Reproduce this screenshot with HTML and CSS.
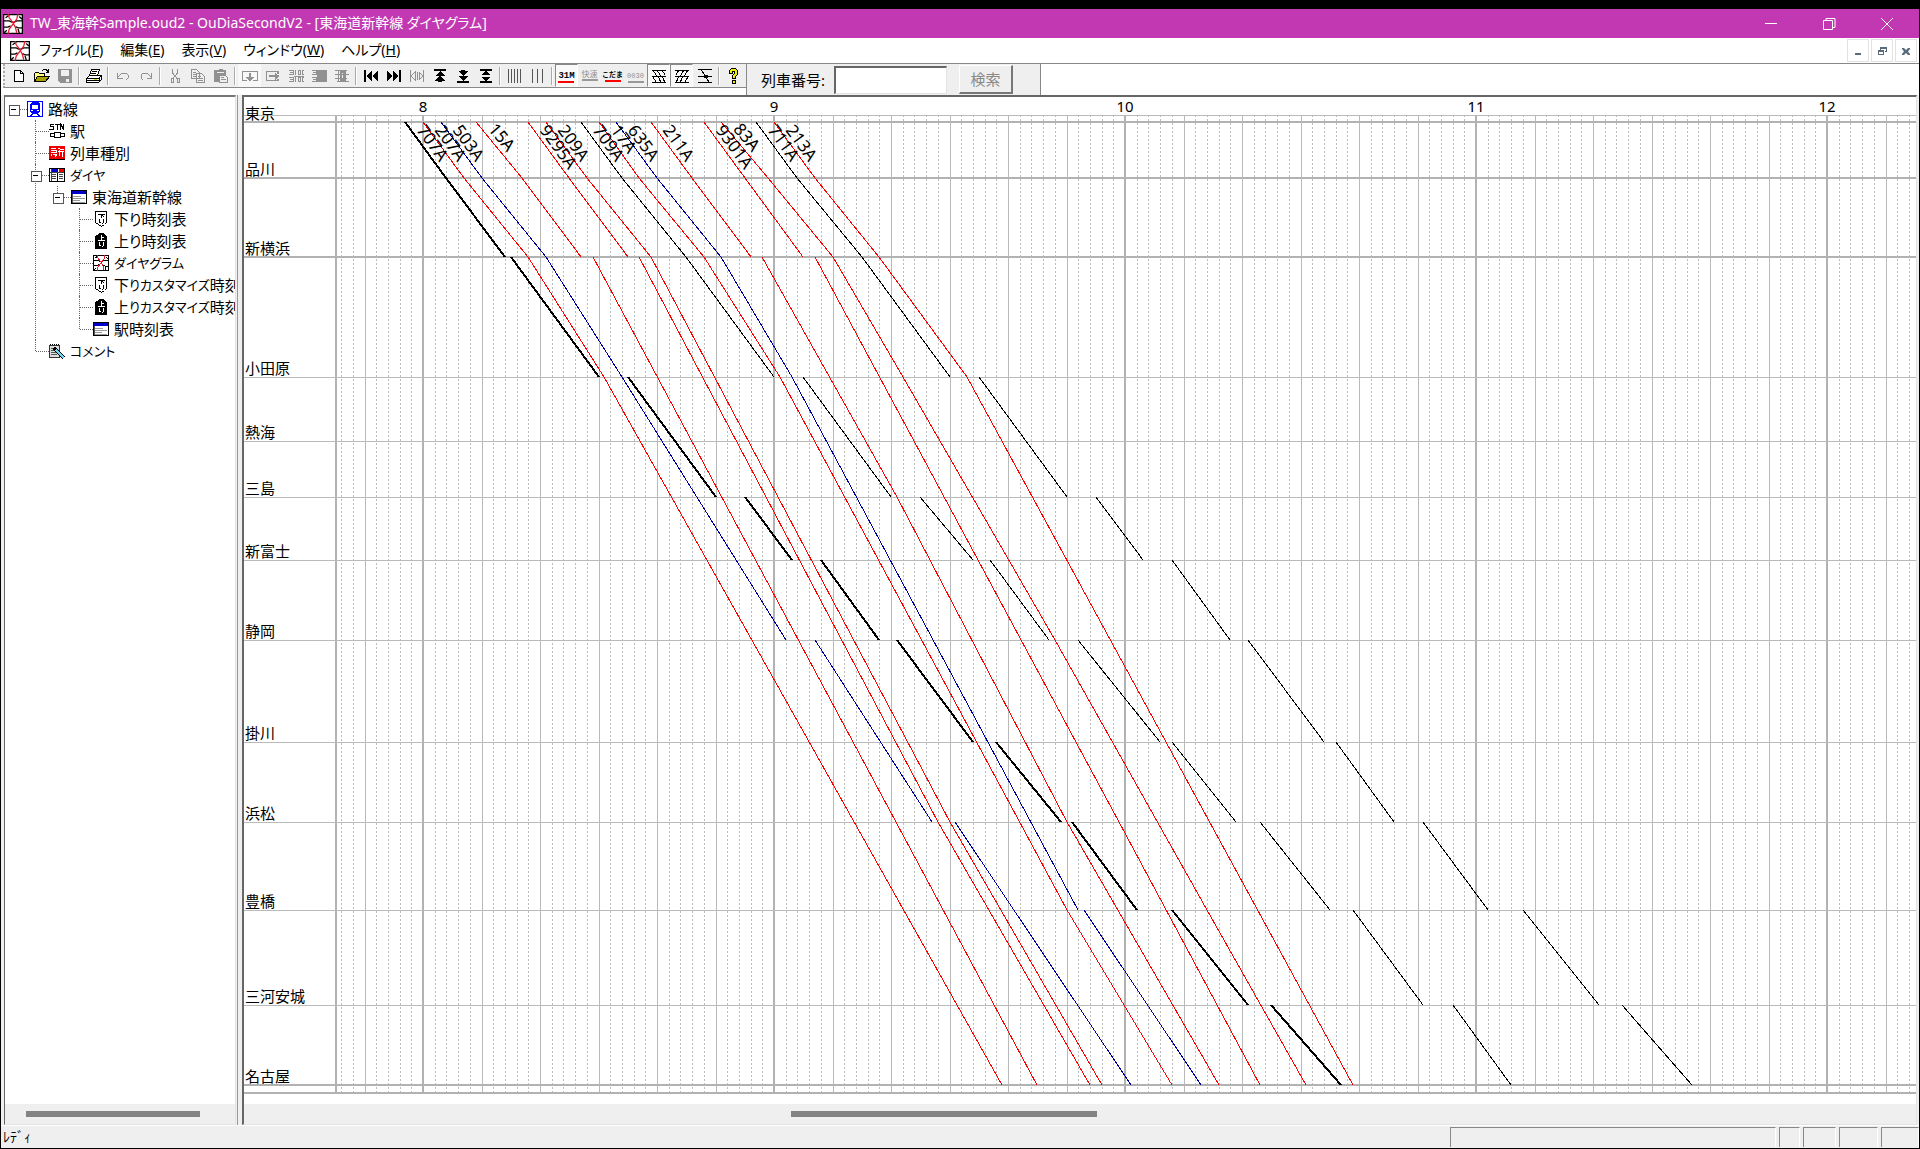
FILE: index.html
```html
<!DOCTYPE html>
<html lang="ja">
<head>
<meta charset="utf-8">
<title>TW_東海幹Sample.oud2 - OuDiaSecondV2</title>
<link rel="stylesheet" href="styles.css">
</head>
<body>
<svg class="defs" width="0" height="0" aria-hidden="true">
  <symbol id="dia" viewBox="0 0 16 16"><path d="M0 0h16v16H0z" fill="#fff"/><path d="M.5.500h15v15H.5zM0 5.500h5l2 1h2l2-1h5M0 10.500h4l2-1M10 10l2 1h4M2 3l3-2M12 12l1 3M3 13l-2 2M13 2l2 2" fill="none" stroke="#000"/><path d="M4 0l1 3 3 4 2 4 1 4M12 0l-1 4-3 4-3 4-1 4" fill="none" stroke="#e8192c"/></symbol>
  <symbol id="down" viewBox="0 0 16 16"><path d="M2.500.500h11v11l-2 2-3 2-3-2-3-2z" fill="#fff" stroke="#000"/><path d="M5 3.500h7M8.500 3v4M9 4.500l2 1M6.500 8v3l1 1M10.500 7.500v4l-2 2" fill="none" stroke="#000"/></symbol>
  <symbol id="up" viewBox="0 0 16 16"><path d="M2 3l2-1 2-2h4l2 2 2 1v13H2z"/><path d="M8.500 2v5M9 4.500h2M5 7.500h7M6.500 9v3l1 1M10.500 8.500v4l-2 2" fill="none" stroke="#fff"/></symbol>
  <symbol id="table" viewBox="0 0 16 16"><path d="M.5 1.500h15v13H.5z" fill="#fff" stroke="#000"/><path d="M1 2h14v3H1z" fill="#00c"/><path d="M2 7.500h8M2 9.500h12M2 11.500h7M2 13.500h12" stroke="#999"/><path d="M1.500 5v9" stroke="#555"/></symbol>
</svg>

<div class="window">
  <header class="titlebar">
    <svg class="app-icon"><use href="#dia"/></svg>
    <h1 class="title">TW_東海幹Sample.oud2 - OuDiaSecondV2 - [東海道新幹線 ダイヤグラム]</h1>
    <div class="caption-buttons">
      <button aria-label="最小化"><svg viewBox="0 0 14 14"><path d="M1 6.500h12"/></svg></button>
      <button aria-label="元に戻す"><svg viewBox="0 0 14 14"><path d="M1.500 3.500h9v9h-9zM4 3.500v-2h9v9h-2"/></svg></button>
      <button aria-label="閉じる"><svg viewBox="0 0 14 14"><path d="M1 1l12 12M13 1L1 13"/></svg></button>
    </div>
  </header>

  <nav class="menubar">
    <svg class="app-icon"><use href="#dia"/></svg>
    <button>ファイル(<u>F</u>)</button>
    <button>編集(<u>E</u>)</button>
    <button>表示(<u>V</u>)</button>
    <button>ウィンドウ(<u>W</u>)</button>
    <button>ヘルプ(<u>H</u>)</button>
    <div class="mdi-buttons">
      <button aria-label="子ウィンドウの最小化"><svg viewBox="0 0 10 10"><path d="M2 7h6v2H2z"/></svg></button>
      <button aria-label="子ウィンドウを戻す"><svg viewBox="0 0 10 10"><path d="M3 1h7v5H8V5h1V3H4v1H3zM1 4h6v5H1zm1 2v2h4V6z"/></svg></button>
      <button aria-label="子ウィンドウを閉じる"><svg viewBox="0 0 10 10"><path d="M1 2h2l2 2 2-2h2v1L7 5.500 9 8v1H7L5 7 3 9H1V8l2-2.500L1 3z"/></svg></button>
    </div>
  </nav>

  <div class="bars">
    <div class="toolbar" role="toolbar" aria-label="標準">
      <button aria-label="新規作成"><svg viewBox="0 0 16 16"><path d="M3.500 2.500h6l3 3v8h-9z" fill="#fff" stroke="#000"/><path d="M9.500 2.500v3h3" fill="none" stroke="#000"/></svg></button>
      <button aria-label="開く"><svg viewBox="0 0 16 16"><path d="M.5 13.500v-8l1-1h3l1 1h5v3" fill="#ffff80" stroke="#000"/><path d="M.5 13.500l3-5h12l-4 5z" fill="#a8a000" stroke="#000"/><path d="M8 3l2-1.500h2l2 2M14.500 1v3h-3" fill="none" stroke="#000"/></svg></button>
      <button aria-label="保存" disabled><svg viewBox="0 0 16 16"><path d="M1 1h14v14H3l-2-2z" fill="#919191"/><path d="M4 2h8v6H4z" fill="#efefef"/><path d="M9 11h3v3H9z" fill="#efefef"/></svg></button>
      <span class="sep"></span>
      <button aria-label="印刷"><svg viewBox="0 0 16 16"><path d="M5.500 1.500h8l-2 6h-8zM.5 10.500l3-3h12v4l-3 3H.5z" fill="#fff" stroke="#000"/><path d="M6 3.500h5M5 5.500h5M1 10.500h12l2-3M1 12.500h12M13.500 10v4" fill="none" stroke="#000"/><path d="M8 11h3v1H8z" fill="#dd0"/></svg></button>
      <span class="sep"></span>
      <button aria-label="元に戻す" disabled><svg viewBox="0 0 16 16"><path d="M2.500 5v5h5M3 9l4-4h4l2 2v3l-2 2" fill="none" stroke="#919191"/></svg></button>
      <button aria-label="やり直し" disabled><svg viewBox="0 0 16 16"><path d="M13.500 5v5h-5M13 9L9 5H5L3 7v3l2 2" fill="none" stroke="#919191"/></svg></button>
      <span class="sep"></span>
      <button aria-label="切り取り" disabled><svg viewBox="0 0 16 16"><path d="M5.500 1v4l5 6M10.500 1v4l-5 6M4 10.500h2v4H4zM10 10.500h2v4h-2z" fill="none" stroke="#919191"/></svg></button>
      <button aria-label="コピー" disabled><svg viewBox="0 0 16 16"><path d="M1.500 1.500h5l3 3v6h-8zM6.500 5.500h5l3 3v6h-8z" fill="#efefef" stroke="#919191"/><path d="M3 4.500h3M3 6.500h3M3 8.500h3M8 8.500h3M8 10.500h5M8 12.500h5" stroke="#919191"/></svg></button>
      <button aria-label="貼り付け" disabled><svg viewBox="0 0 16 16"><path d="M1 2h4l1-1h3l1 1h3v12H1z" fill="#919191"/><path d="M4 4.500h7" stroke="#efefef"/><path d="M6.500 7.500h6l2 2v5h-8z" fill="#efefef" stroke="#919191"/><path d="M8 9.500h3M8 11.500h5" stroke="#919191"/></svg></button>
      <span class="sep"></span>
      <button class="hot" aria-label="下に挿入" disabled><svg viewBox="0 0 16 16"><path d="M.5 3.500h15M.5 3v10M15.500 3v10M1 12.500h4M11 12.500h4M8 5v6" fill="none" stroke="#919191" stroke-width="1.500"/><path d="M4 9h8l-4 5z" fill="#919191"/></svg></button>
      <button aria-label="右に挿入" disabled><svg viewBox="0 0 16 16"><path d="M13 3.500H1.500v9H13M13 3v3M13 11v2M4 8h8" fill="none" stroke="#919191" stroke-width="1.500"/><path d="M10 5l5 3-5 4z" fill="#919191"/></svg></button>
      <button aria-label="時刻を表示" disabled><svg viewBox="0 0 16 16"><path d="M1 2.500h4v4H1M2 4.500h3M1 9.500h4v4H1M2 11.500h3M7.500 2v5M10 2.500h2v4h-2zM14 2.500h2v4h-2zM7.500 9v5M10 9.500h2v4h-2zM14 9.500h2v4h-2zM6 8h10" fill="none" stroke="#919191"/></svg></button>
      <button aria-label="時刻を隠す" disabled><svg viewBox="0 0 16 16"><path d="M1 2.500h4v4H1M2 4.500h3M1 9.500h4v4H1M2 11.500h3" fill="none" stroke="#919191"/><path d="M6 2h10v12H6z" fill="#919191"/></svg></button>
      <button aria-label="列車編集" disabled><svg viewBox="0 0 16 16"><path d="M1 2.500h12M3 13.500h12M4.500 2v11M11.500 2v11M1 6.500h14M1 10.500h12M7 4h3v8H7z" fill="none" stroke="#919191" stroke-width="1.500"/></svg></button>
      <span class="sep"></span>
      <button aria-label="先頭へ"><svg viewBox="0 0 16 16"><path d="M1 2h2v12H1zM3 8l6-5v10zM9 8l6-5v10z"/></svg></button>
      <button aria-label="末尾へ"><svg viewBox="0 0 16 16"><path d="M13 2h2v12h-2zM13 8L7 3v10zM7 8L1 3v10z"/></svg></button>
      <button aria-label="左右を詰める" disabled><svg viewBox="0 0 16 16"><path d="M1.500 2v12M14.500 2v12M2 8l4-4v8zM14 8l-4-4v8zM8 4v8" fill="none" stroke="#919191"/></svg></button>
      <button aria-label="上端へ"><svg viewBox="0 0 16 16"><path d="M2 1h12v2H2zM8 3l5 5H3zM8 7l5 6h-3v1H6v-1H3z"/></svg></button>
      <button aria-label="下端へ"><svg viewBox="0 0 16 16"><path d="M2 13h12v2H2zM8 13l5-5H3zM8 8l5-5h-3V2H6v1H3z"/></svg></button>
      <button aria-label="中央へ"><svg viewBox="0 0 16 16"><path d="M2 1h12v2H2zM2 13h12v2H2zM8 3l5 4H3zM8 13l5-4H3z"/></svg></button>
      <span class="sep"></span>
      <button aria-label="細かい目盛"><svg viewBox="0 0 16 16"><path d="M1.500 1v14M4.500 1v14M7.500 1v14M10.500 1v14M13.500 1v14" stroke="#555"/></svg></button>
      <button aria-label="粗い目盛"><svg viewBox="0 0 16 16"><path d="M2.500 1v14M7.500 1v14M12.500 1v14" stroke="#555"/></svg></button>
      <span class="sep"></span>
      <button class="tag on" aria-pressed="true">31M</button>
      <button class="tag kanji" disabled>快速</button>
      <button class="tag kanji name">こだま</button>
      <button class="tag" disabled>0030</button>
      <button class="on" aria-label="下り列車" aria-pressed="true"><svg viewBox="0 0 16 16"><path d="M1 2.500h14M1 8.500h14M1 14.500h14" stroke="#000"/><path d="M2 2l3 5 3 3 2 5M6 2l3 5 3 3 2 5M11 2l3 5M2 9l3 5" fill="none" stroke="#000"/></svg></button>
      <button class="on" aria-label="上り列車" aria-pressed="true"><svg viewBox="0 0 16 16"><path d="M1 2.500h14M1 8.500h14M1 14.500h14" stroke="#000"/><path d="M14 2l-3 5-3 3-2 5M10 2L7 7l-3 3-2 5M5 2L2 7M14 9l-3 5" fill="none" stroke="#000"/></svg></button>
      <button aria-label="停車時間"><svg viewBox="0 0 16 16"><path d="M1 1.500h14M1 8.500h14M1 14.500h14M4 1l4 7 4 6" fill="none" stroke="#000"/><path d="M7 7h4v3H7z"/></svg></button>
      <span class="sep"></span>
      <button aria-label="ヘルプ"><svg viewBox="0 0 16 16"><path d="M3.500 5.500v-3l2-2h4l2 2v4l-2 2v2h-3v-3l2-2v-2h-2v2zM6.500 12.500h3v3h-3z" fill="#ee0" stroke="#000"/></svg></button>
    </div>
    <form class="searchbar" onsubmit="return false">
      <label for="train-no">列車番号:</label>
      <input id="train-no" type="text">
      <button disabled>検索</button>
    </form>
  </div>

  <main class="workspace">
    <aside class="tree-pane">
      <ul class="tree">
        <li><div class="row"><span class="stub box"></span><svg viewBox="0 0 16 16"><path d="M.5.500h15v15H.5z" fill="#fff" stroke="#00f"/><path d="M3 3l2-2h6l2 2v8l-2 1 2 3h-2l-1-2H6l-1 2H3l2-3-2-1z" fill="#00f"/><path d="M5 4h6v4H5zM4 9h2v1H4zM10 9h2v1h-2z" fill="#fff"/></svg>路線</div>
          <ul>
            <li><div class="row"><span class="stub"></span><svg viewBox="0 0 16 16"><path d="M5 1.500H1.500v2h3v3H0M6 1.500h5M8.500 1v6M11.500 7V1l3 5V1" fill="none" stroke="#000" stroke-width="1.500"/><path d="M5.500 9.500h6v5h-6zM1.500 10.500h4v3h-4zM11.500 10.500h4v3h-4z" fill="#fff" stroke="#000"/></svg>駅</div></li>
            <li><div class="row"><span class="stub"></span><svg viewBox="0 0 16 16"><path d="M0 1h16v13H0z" fill="#e00"/><path d="M2 3.500h5M2 5.500h5v2H2M2 9v2M4 9.500h2v2M7 9v2M9 4l2-1M9 7l1-1v5M11 4.500h4M11 6.500h4M13.500 7v5" fill="none" stroke="#fff"/><path d="M0 14.500h16" stroke="#000"/></svg>列車種別</div></li>
            <li><div class="row"><span class="stub box"></span><svg viewBox="0 0 16 16"><path d="M.5 1.500h15v13H.5zM8.500 2v13" fill="#fff" stroke="#000"/><path d="M3 2h5v3H3z" fill="#00c"/><path d="M10 2h5v3h-5z" fill="#e00"/><path d="M1 5.500h14M3 7.500h4M3 9.500h4M3 11.500h4M10 7.500h4M10 9.500h4M10 11.500h4M2.500 2v12" stroke="#444"/></svg><span class="kana">ダイヤ</span></div>
              <ul>
                <li><div class="row"><span class="stub box"></span><svg><use href="#table"/></svg>東海道新幹線</div>
                  <ul>
                    <li><div class="row"><span class="stub"></span><svg><use href="#down"/></svg>下り時刻表</div></li>
                    <li><div class="row"><span class="stub"></span><svg><use href="#up"/></svg>上り時刻表</div></li>
                    <li><div class="row"><span class="stub"></span><svg><use href="#dia"/></svg><span class="kana">ダイヤグラム</span></div></li>
                    <li><div class="row"><span class="stub"></span><svg><use href="#down"/></svg>下<span class="kana">りカスタマイズ</span>時刻表</div></li>
                    <li><div class="row"><span class="stub"></span><svg><use href="#up"/></svg>上<span class="kana">りカスタマイズ</span>時刻表</div></li>
                    <li><div class="row"><span class="stub"></span><svg><use href="#table"/></svg>駅時刻表</div></li>
                  </ul>
                </li>
              </ul>
            </li>
            <li><div class="row"><span class="stub"></span><svg viewBox="0 0 16 16"><path d="M.5 2.500h10v12H.5z" fill="#ddd" stroke="#333"/><path d="M1 1.500h10" stroke="#000" stroke-dasharray="1 1"/><path d="M2 5.500h6M2 7.500h4M2 9.500h5M2 11.500h6" stroke="#555"/><path d="M5 5l10 10" stroke="#000" stroke-width="4"/><path d="M7 7l8 8" stroke="#6cd8f0" stroke-width="2"/></svg><span class="kana">コメント</span></div></li>
          </ul>
        </li>
      </ul>
      <div class="scrollbar"><span class="thumb tree-thumb"></span></div>
    </aside>

    <section class="view" aria-label="東海道新幹線 ダイヤグラム">
      <svg id="diagram" class="diagram"></svg>
      <div class="scrollbar"><span class="thumb view-thumb"></span></div>
    </section>
  </main>

  <footer class="statusbar">
    <span class="ready">ﾚﾃﾞｨ</span>
    <span class="cell message"></span>
    <span class="cell mini"></span>
    <span class="cell caps"></span>
    <span class="cell num"></span>
    <span class="cell scrl"></span>
  </footer>
</div>
<script src="diagram.js"></script>
</body>
</html>
```
FILE: styles.css
```css
* { box-sizing: border-box; }

body {
  margin: 0;
  padding: 9px 1px 1px;
  height: 100vh;
  background: #000;
  color: #000;
  font: 15px/20px "Noto Sans", "Noto Sans CJK JP", sans-serif;
  font-feature-settings: "palt";
  overflow: hidden;
}

button, input { font: inherit; color: inherit; border: 0; padding: 0; margin: 0; background: none; font-feature-settings: inherit; }
ul { list-style: none; margin: 0; padding: 0; }
svg { display: block; }
.defs { position: absolute; }

.window { height: 100%; display: flex; flex-direction: column; background: #fff; }

.titlebar { display: flex; align-items: center; height: 29px; padding: 0 3px 0 2px; background: #c238b2; color: #fff; }
.title { margin: 0 auto 0 7px; padding-bottom: 2px; font-size: 14px; font-weight: 400; white-space: nowrap; }
.app-icon { width: 20px; height: 20px; flex: none; }
.caption-buttons { display: flex; }
.caption-buttons button { width: 58px; height: 29px; display: grid; place-items: center; }
.caption-buttons svg { width: 14px; height: 14px; fill: none; stroke: #fff; }

.menubar { display: flex; align-items: center; gap: 17px; height: 26px; padding: 0 2px 0 9px; font-size: 14px; border-bottom: 1px solid #888; }
.menubar > button { padding-bottom: 2px; }
.menubar .app-icon { margin-right: -8px; }
.mdi-buttons { display: flex; gap: 2px; margin-left: auto; }
.mdi-buttons button { width: 22px; height: 23px; border: 1px solid #e2e2e2; display: grid; place-items: center; }
.mdi-buttons svg { width: 10px; height: 10px; fill: #5a6b7d; }

.bars { display: flex; align-items: flex-start; height: 31px; padding-left: 2px; }
.toolbar { display: flex; align-items: center; width: 743px; height: 24px; padding: 0 4px 0 2px; background: #efefef; border-bottom: 1px solid #888; border-left: 2px dotted #aaa; }
.toolbar button { width: 23px; height: 23px; display: grid; place-items: center; flex: none; }
.toolbar button svg { width: 16px; height: 16px; shape-rendering: crispEdges; }
.toolbar .on { background: #f9f9f9; border: 1px solid #fff; border-top-color: #888; border-left-color: #888; }
.toolbar .hot { background: #f8f8f8; }
.sep { width: 2px; height: 18px; margin: 0 2px; flex: none; background: #aaa; border-right: 1px solid #fff; }
.toolbar .tag { font: 700 9px/9px "Liberation Mono", "Noto Sans CJK JP", monospace; padding-top: 4px; align-content: center; justify-content: center; }
.toolbar .tag::after { content: ""; width: 16px; height: 2px; background: #f00; }
.toolbar .tag:disabled { color: #919191; font-weight: 400; font-size: 7px; }
.toolbar .tag:disabled::after { background: #999; }
.toolbar .tag.kanji { padding-top: 0; font-size: 8px; }
.toolbar .tag.name { padding-top: 2px; font-size: 7px; }

.searchbar { display: flex; align-items: center; height: 31px; width: 295px; padding-left: 14px; background: #efefef; border-left: 1px solid #888; border-right: 1px solid #888; }
.searchbar label { width: 73px; white-space: nowrap; }
.searchbar input { width: 113px; height: 28px; background: #fff; border: 1px solid #e3e3e3; border-top: 2px solid #666; border-left: 2px solid #666; }
.searchbar button { width: 54px; height: 29px; margin-left: 12px; color: #888; border: 1px solid #fff; border-right: 2px solid #777; border-bottom: 2px solid #777; }

.workspace { flex: 1; min-height: 0; display: flex; gap: 6px; padding: 0 2px 0 3px; background: linear-gradient(90deg, #efefef 236px, #999 236px 237px, #efefef 237px); }
.tree-pane { width: 232px; display: flex; flex-direction: column; flex: none; background: #fff; border-left: 1px solid #666; border-top: 2px solid #777; border-right: 1px solid #e3e3e3; border-bottom: 1px solid #e3e3e3; }
.tree { flex: 1; padding: 1px 0 0; overflow: hidden; }
.tree li { position: relative; }
.tree li li::before { content: ""; position: absolute; left: 8px; top: 0; bottom: 0; border-left: 1px dotted #666; }
.tree li li:last-child::before { bottom: auto; height: 11px; }
.tree ul { margin-left: 22px; }
.row { display: flex; align-items: center; height: 22px; white-space: nowrap; }
.row svg { width: 16px; height: 16px; margin-right: 5px; flex: none; shape-rendering: crispEdges; }
.kana { font-size: 13px; }
.stub { position: relative; width: 22px; height: 1px; padding-left: 9px; flex: none; }
.stub::before { content: ""; display: block; border-top: 1px dotted #666; }
.stub.box::after { content: ""; position: absolute; left: 4px; top: -4px; width: 9px; height: 9px; border: 1px solid #555; background: linear-gradient(#000, #000) 1px 3px / 5px 1px no-repeat #fff; }

.view { flex: 1; min-width: 0; display: flex; flex-direction: column; background: #fff; border-left: 2px solid #666; border-top: 2px solid #666; border-right: 1px solid #e3e3e3; border-bottom: 1px solid #e3e3e3; }
.diagram { flex: 1; min-height: 0; width: 100%; font-size: 15px; }
.diagram .grid { stroke: #bababa; shape-rendering: crispEdges; }
.diagram .minor { stroke: #bcbcbc; stroke-dasharray: 2 2; }
.diagram .major { stroke: #b2b2b2; stroke-width: 2; }
.diagram .train { fill: none; stroke-width: 1; shape-rendering: crispEdges; }
.diagram .bold { stroke-width: 2; }
.diagram .hour { text-anchor: middle; }
.diagram .number { font-size: 17px; }

.scrollbar { height: 20px; padding-top: 7px; flex: none; background: #efefef; }
.thumb { display: block; height: 6px; background: #838383; }
.tree-thumb { width: 76%; margin-left: 9%; }
.view-thumb { width: 306px; margin-left: 547px; }

.statusbar { display: flex; gap: 3px; height: 23px; padding: 1px 0 0 2px; background: #efefef; border-top: 1px solid #fff; }
.ready { margin-right: auto; font-size: 14px; }
.cell { height: 20px; border-top: 1px solid #888; border-left: 1px solid #888; border-right: 1px solid #fff; }
.message { width: 17%; }
.mini { width: 21px; }
.caps { width: 33px; }
.num { width: 39px; }
.scrl { width: 38px; }
```
FILE: diagram.js
```js
const SVG = "http://www.w3.org/2000/svg";
const svg = document.getElementById("diagram");
const MINUTE = 351 / 60;
const X8 = 179;
const TOP = 18;
const BOTTOM = 996;
const LABEL_RIGHT = 92;
const LAST_MINUTE = (svg.clientWidth - X8) / MINUTE;

// [name, y, major]
const stations = [
  ["東京", 25, 1], ["品川", 81, 1], ["新横浜", 160, 1], ["小田原", 280], ["熱海", 344],
  ["三島", 400], ["新富士", 463], ["静岡", 543], ["掛川", 645], ["浜松", 725],
  ["豊橋", 813], ["三河安城", 908], ["名古屋", 988, 1]
];

// Stops are [station index, minutes after 8:00]; each inner list is one run between stops.
const RED = "#f00", BLUE = "#00009c", BLACK = "#000";
const trains = [
  { no: "707A", color: BLACK, bold: true, runs: [[[0,-3],[1,4],[2,14]], [[2,15],[3,30]], [[3,35],[5,50]], [[5,55],[6,63]], [[6,68],[7,78]], [[7,81],[8,94]], [[8,98],[9,109]], [[9,111],[10,122]], [[10,128],[11,141]], [[11,145],[12,157]]] },
  { no: "207A", color: RED, runs: [[[0,0],[1,7],[2,18],[3,31],[12,99]]] },
  { no: "503A", color: BLUE, runs: [[[0,3],[1,10],[2,21],[3,34],[7,62]], [[7,67],[9,87]], [[9,91],[12,121]]] },
  { no: "15A", color: RED, runs: [[[0,9],[1,17],[2,27]], [[2,29],[12,105]]] },
  { no: "9295A", color: RED, runs: [[[0,18],[1,25],[2,35]], [[2,37],[9,88],[12,114]]] },
  { no: "209A", color: RED, runs: [[[0,21],[1,28],[2,39],[9,90],[12,116]]] },
  { no: "709A", color: BLACK, runs: [[[0,27],[1,34],[2,45],[3,60]], [[3,65],[5,80]], [[5,85],[6,94]], [[6,97],[7,107]], [[7,112],[8,126]], [[8,128],[9,139]], [[9,143],[10,155]], [[10,159],[11,171]], [[11,176],[12,186]]] },
  { no: "17A", color: RED, runs: [[[0,30],[1,37],[2,48],[3,61],[10,110],[12,128]]] },
  { no: "635A", color: BLUE, runs: [[[0,33],[1,40],[2,51],[3,63],[10,112]], [[10,113],[12,133]]] },
  { no: "211A", color: RED, runs: [[[0,39],[1,46],[2,56]], [[2,58],[5,81],[9,110],[12,136]]] },
  { no: "9301A", color: RED, runs: [[[0,48],[1,55],[2,65]], [[2,67],[9,119],[12,143]]] },
  { no: "83A", color: RED, runs: [[[0,51],[1,59],[2,70],[3,82],[7,108],[10,134],[12,151]]] },
  { no: "711A", color: BLACK, runs: [[[0,57],[1,64],[2,75],[3,90]], [[3,95],[5,110]], [[5,115],[6,123]], [[6,128],[7,138]], [[7,141],[8,154]], [[8,156],[9,166]], [[9,171],[10,182]], [[10,188],[11,201]], [[11,205],[12,217]]] },
  { no: "213A", color: RED, runs: [[[0,60],[1,67],[2,78],[3,93],[12,159]]] }
];

const x = m => Math.round(X8 + m * MINUTE);

function add(name, attrs, text) {
  const el = document.createElementNS(SVG, name);
  for (const key in attrs) el.setAttribute(key, attrs[key]);
  if (text) el.textContent = text;
  svg.appendChild(el);
}

function line(x1, y1, x2, y2, kind) {
  const shift = kind === "major" ? 0 : 0.5;
  const dx = x1 === x2 ? shift : 0;
  const dy = x1 === x2 ? 0 : shift;
  add("line", { x1: x1 + dx, y1: y1 + dy, x2: x2 === "100%" ? x2 : x2 + dx, y2: y2 + dy, class: "grid " + kind });
}

for (let m = -14; m < LAST_MINUTE; m += 2) {
  line(x(m), TOP, x(m), BOTTOM, m % 60 === 0 ? "major" : m % 10 === 0 ? "" : "minor");
}
line(LABEL_RIGHT, TOP, LABEL_RIGHT, BOTTOM, "major");
line(0, TOP, "100%", TOP, "");
line(0, BOTTOM, "100%", BOTTOM, "major");

for (const [name, y, major] of stations) {
  line(0, y, "100%", y, major ? "major" : "");
  add("text", { x: 1, y: y - 3 }, name);
}
for (let h = 8; (h - 8) * 60 < LAST_MINUTE; h++) {
  add("text", { x: x((h - 8) * 60), y: TOP - 3, class: "hour" }, String(h));
}

for (const train of trains) {
  for (const run of train.runs) {
    const points = run.map(([s, m]) => x(m) + "," + stations[s][1]).join(" ");
    add("polyline", { points, stroke: train.color, class: train.bold ? "train bold" : "train" });
  }
}

for (const train of trains) {
  const [start, next] = train.runs[0];
  const angle = Math.atan2(stations[1][1] - stations[0][1], (next[1] - start[1]) * MINUTE) * 180 / Math.PI;
  add("text", { x: 13, y: -4, class: "number", transform: `translate(${x(start[1])} ${stations[0][1]}) rotate(${angle})` }, train.no);
}
```
